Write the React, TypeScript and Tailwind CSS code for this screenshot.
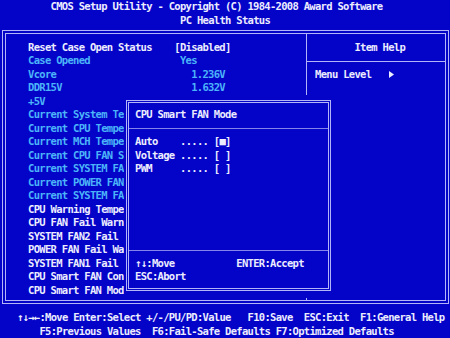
import React from 'react';

const WHITE = 'text-[#ececff]';
const CYAN = 'text-[#4cb4f8]';

type Row = { label: string; value?: string; cyan: boolean; valueCyan?: boolean; valueCol?: number };

// value columns are counted from col 31 of the 80-column screen
const rows: Row[] = [
  { label: 'Reset Case Open Status', value: '[Disabled]', cyan: false, valueCol: 0 },
  { label: 'Case Opened', value: 'Yes', cyan: true, valueCyan: true, valueCol: 1 },
  { label: 'Vcore', value: '1.236V', cyan: true, valueCyan: true, valueCol: 3 },
  { label: 'DDR15V', value: '1.632V', cyan: true, valueCyan: true, valueCol: 3 },
  { label: '+5V', cyan: true },
  { label: 'Current System Te', cyan: true },
  { label: 'Current CPU Tempe', cyan: true },
  { label: 'Current MCH Tempe', cyan: true },
  { label: 'Current CPU FAN S', cyan: true },
  { label: 'Current SYSTEM FA', cyan: true },
  { label: 'Current POWER FAN', cyan: true },
  { label: 'Current SYSTEM FA', cyan: true },
  { label: 'CPU Warning Tempe', cyan: false },
  { label: 'CPU FAN Fail Warn', cyan: false },
  { label: 'SYSTEM FAN2 Fail', cyan: false },
  { label: 'POWER FAN Fail Wa', cyan: false },
  { label: 'SYSTEM FAN1 Fail', cyan: false },
  { label: 'CPU Smart FAN Con', cyan: false },
  { label: 'CPU Smart FAN Mod', cyan: false },
];

const CH = 5.625;

const Line: React.FC<{ className?: string; children: React.ReactNode }> = ({ className = '', children }) => (
  <div className={`h-[13.52px] leading-[13.52px] whitespace-pre ${className}`}>{children}</div>
);

// keys in the bottom bar sit at fixed text columns
const Keys: React.FC<{ items: [number, string][] }> = ({ items }) => (
  <div className="relative h-[13.52px] leading-[13.52px] whitespace-pre">
    {items.map(([col, text]) => (
      <span key={col} className="absolute top-0" style={{ left: col * CH }}>
        {text}
      </span>
    ))}
  </div>
);

const App: React.FC = () => {
  return (
    <div className="relative w-[450px] h-[338px] overflow-hidden bg-[#0404c8] font-['DejaVu_Sans_Mono',monospace] text-[10.5px] font-bold tracking-[-0.696px] text-[#ececff]">
      {/* header */}
      <div className="h-[30px]">
        <Line className="pl-[50.6px]">CMOS Setup Utility - Copyright (C) 1984-2008 Award Software</Line>
        <Line className="pl-[180px]">PC Health Status</Line>
      </div>

      {/* main double frame */}
      <div className="ml-[2px] w-[447px] h-[274px] border border-[#b4b4f8] p-[2px]">
        <div className="flex h-full border border-[#b4b4f8]">
          <div className="w-[301px] border-r border-[#b4b4f8] pt-[6.56px] pl-[22.1px]">
            {rows.map((r, i) => (
              <Line key={i} className="flex">
                <span className={`w-[146.25px] ${r.cyan ? CYAN : WHITE}`}>{r.label}</span>
                {r.value && (
                  <span
                    className={r.valueCyan ? CYAN : WHITE}
                    style={{ marginLeft: (r.valueCol ?? 0) * CH }}
                  >
                    {r.value}
                  </span>
                )}
              </Line>
            ))}
          </div>
          <div className="flex-1">
            <div className="h-[28px] border-b border-[#b4b4f8] pt-[6.56px] pl-[47.4px]">
              <Line>Item Help</Line>
            </div>
            <div className="pt-[5.6px] pl-[8px]">
              <Line className="flex items-center">
                {'Menu Level   '}
                <svg width="6" height="7" viewBox="0 0 6 7" className="ml-[1px]">
                  <path d="M0 0 L5 3.5 L0 7 Z" fill="#ececff" />
                </svg>
              </Line>
            </div>
          </div>
        </div>
      </div>

      {/* key help */}
      <div className="mt-[7px]">
        <Keys
          items={[
            [3, '↑↓→←:Move'],
            [13, 'Enter:Select'],
            [26, '+/-/PU/PD:Value'],
            [44, 'F10:Save'],
            [54, 'ESC:Exit'],
            [64, 'F1:General Help'],
          ]}
        />
        <Keys
          items={[
            [7, 'F5:Previous Values'],
            [27, 'F6:Fail-Safe Defaults'],
            [49, 'F7:Optimized Defaults'],
          ]}
        />
      </div>

      {/* popup dialog */}
      <div className="absolute left-[124px] top-[94.6px] w-[208px] h-[203px] bg-[#0404c8] pl-[2px] pt-[5.4px] pr-[1px] pb-[6.6px]">
        <div className="flex flex-col h-full border-[3px] border-double border-[#b4b4f8]">
          <div className="h-[26px] border-b border-[#8484ec] pt-[5.24px] pl-[6px]">
            <Line>CPU Smart FAN Mode</Line>
          </div>
          <div className="h-[122px] border-b border-[#8484ec] pt-[6.2px] pl-[6px]">
            <Line>{'Auto    ..... [■]'}</Line>
            <Line>{'Voltage ..... [ ]'}</Line>
            <Line>{'PWM     ..... [ ]'}</Line>
          </div>
          <div className="pt-[5.8px] pl-[6px]">
            <Line>{'↑↓:Move           ENTER:Accept'}</Line>
            <Line>ESC:Abort</Line>
          </div>
        </div>
      </div>
    </div>
  );
};

export default App;
